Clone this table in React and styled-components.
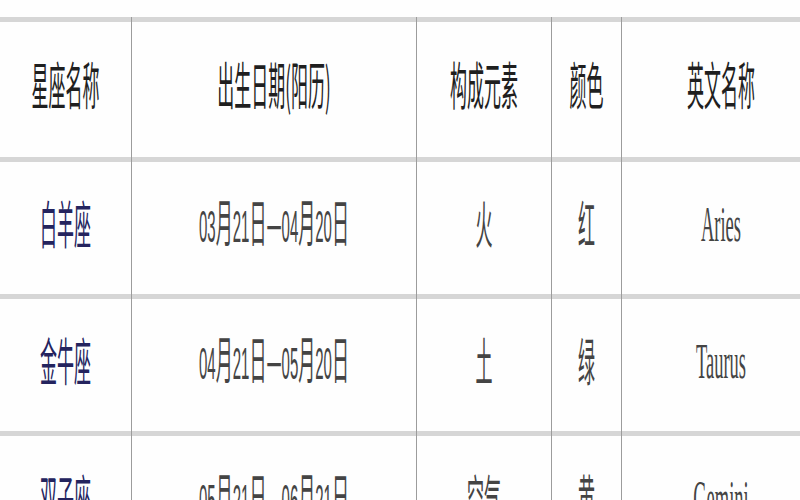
import React from "react";
import styled, { createGlobalStyle } from "styled-components";

const Global = createGlobalStyle`
  html, body { margin: 0; padding: 0; background: #fff; overflow: hidden; }
  body { font-family: "Noto Sans CJK SC", "Liberation Sans", sans-serif; }
`;

const Page = styled.div`
  width: 800px;
  height: 500px;
  overflow: hidden;
  padding-top: 17px;
  box-sizing: border-box;
  background: #fefefe;
`;

const Table = styled.div`
  display: flex;
  flex-direction: column;
  width: 820px;
`;

const Row = styled.div`
  display: grid;
  grid-template-columns: 132px 285px 135px 70px 1fr;
  height: ${(p) => p.$h}px;
  box-sizing: border-box;
  border-top: 5px solid #d6d6d6;
  flex-shrink: 0;
`;

const Cell = styled.div`
  display: flex;
  align-items: center;
  justify-content: center;
  box-sizing: border-box;
  border-right: ${(p) => (p.$last ? "none" : "1px solid #9c9c9c")};
  margin-top: -5px;
  padding-top: 5px;
  overflow: visible;
`;

const Txt = styled.span`
  display: inline-block;
  white-space: nowrap;
  font-family: ${(p) =>
    p.$latin
      ? `"Liberation Serif", "Noto Sans CJK SC", serif`
      : `"Noto Sans CJK SC", "Liberation Sans", sans-serif`};
  font-size: ${(p) => (p.$latin ? "18.5px" : "17px")};
  font-weight: 400;
  color: ${(p) => p.$color || "#444"};
  transform: ${(p) =>
    p.$latin ? "translateY(-3px) scaleY(2.75)" : "translateY(-7px) scaleY(3)"};
  transform-origin: center;
  line-height: 1;
  letter-spacing: 0;
`;

const Digit = styled.span`
  font-family: "Liberation Sans", sans-serif;
  font-size: 15px;
`;

const DateText = ({ value }) => {
  const parts = value.split(/(\d+)/).filter(Boolean);
  return (
    <Txt>
      {parts.map((p, i) =>
        /\d/.test(p) ? <Digit key={i}>{p}</Digit> : <React.Fragment key={i}>{p}</React.Fragment>
      )}
    </Txt>
  );
};

const headers = ["星座名称", "出生日期(阳历)", "构成元素", "颜色", "英文名称"];

const rows = [
  { name: "白羊座", date: "03月21日—04月20日", el: "火", color: "红", en: "Aries" },
  { name: "金牛座", date: "04月21日—05月20日", el: "土", color: "绿", en: "Taurus" },
  { name: "双子座", date: "05月21日—06月21日", el: "空气", color: "黄", en: "Gemini" },
];

export default function App() {
  return (
    <>
      <Global />
      <Page>
        <Table>
          <Row $h={140}>
            {headers.map((h, i) => (
              <Cell key={h} $last={i === headers.length - 1}>
                <Txt $color="#1f1f1f">{h}</Txt>
              </Cell>
            ))}
          </Row>
          {rows.map((r) => (
            <Row key={r.name} $h={137}>
              <Cell>
                <Txt $color="#24245e">{r.name}</Txt>
              </Cell>
              <Cell>
                <DateText value={r.date} />
              </Cell>
              <Cell>
                <Txt>{r.el}</Txt>
              </Cell>
              <Cell>
                <Txt>{r.color}</Txt>
              </Cell>
              <Cell $last>
                <Txt $latin>{r.en}</Txt>
              </Cell>
            </Row>
          ))}
        </Table>
      </Page>
    </>
  );
}
